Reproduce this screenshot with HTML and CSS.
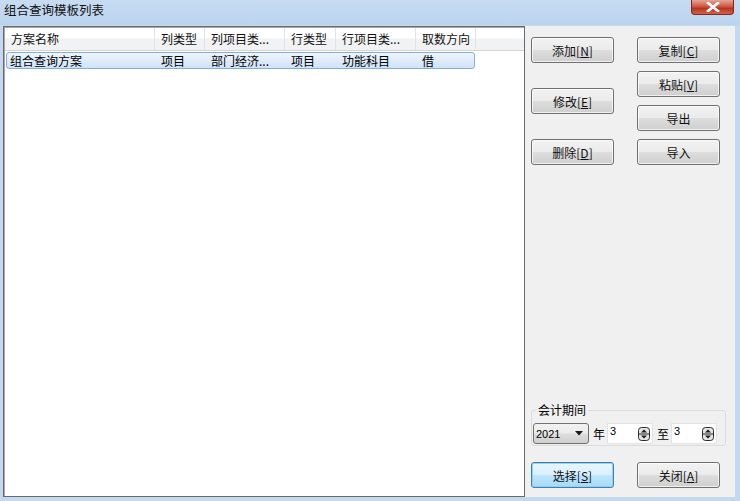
FILE: index.html
```html
<!DOCTYPE html>
<html>
    <head>
        <meta charset="utf-8">
        <link rel="stylesheet" href="styles.css">
    </head>
    <body>
        <div class='window'>
            <div class='titlebar'>
                <span class='title'>组合查询模板列表</span>
                <span class='close'>
                    <svg width="14" height="10" viewBox="0 0 14 10"><path d="M2 1 L12 9 M12 1 L2 9" stroke="#fff" stroke-width="2.6" stroke-linecap="square"/><path d="M2 1 L12 9 M12 1 L2 9" stroke="#fff" stroke-width="1.4" opacity="0.6"/></svg>
                </span>
            </div>
            <div class='content'>
                <div class='list'>
                    <div class='head'>
                        <div class='col c1'>方案名称</div>
                        <div class='col c2'>列类型</div>
                        <div class='col c3'>列项目类...</div>
                        <div class='col c4'>行类型</div>
                        <div class='col c5'>行项目类...</div>
                        <div class='col c6'>取数方向</div>
                        <div class='col rest'></div>
                    </div>
                    <div class='row selected'>
                        <div class='col c1'>组合查询方案</div>
                        <div class='col c2'>项目</div>
                        <div class='col c3'>部门经济...</div>
                        <div class='col c4'>项目</div>
                        <div class='col c5'>功能科目</div>
                        <div class='col c6'>借</div>
                    </div>
                </div>
                <div class='side'>
                    <div class='actions'>
                        <div class='stack left'>
                            <button class='btn'>添加[<u>N</u>]</button>
                            <button class='btn'>修改[<u>E</u>]</button>
                            <button class='btn'>删除[<u>D</u>]</button>
                        </div>
                        <div class='stack right'>
                            <button class='btn'>复制[<u>C</u>]</button>
                            <button class='btn'>粘贴[<u>V</u>]</button>
                            <button class='btn'>导出</button>
                            <button class='btn'>导入</button>
                        </div>
                    </div>
                    <fieldset class='period'>
                        <legend>会计期间</legend>
                        <div class='controls'>
                            <div class='combo'>
                                <span>2021</span>
                                <svg width="8" height="5" viewBox="0 0 8 5"><path d="M0 0 H8 L4 4.5 Z" fill="#1a1a1a"/></svg>
                            </div>
                            <span class='lbl'>年</span>
                            <div class='spin'>
                                <span>3</span>
                                <svg width="12" height="14" viewBox="0 0 12 14"><rect x="0.5" y="0.5" width="11" height="13" rx="3" fill="#e4e4e4" stroke="#2b2b2b"/><line x1="1" y1="7" x2="11" y2="7" stroke="#2b2b2b"/><path d="M3 5.5 L6 2.5 L9 5.5 Z M3 8.5 L9 8.5 L6 11.5 Z" fill="#1a1a1a"/></svg>
                            </div>
                            <span class='lbl'>至</span>
                            <div class='spin'>
                                <span>3</span>
                                <svg width="12" height="14" viewBox="0 0 12 14"><rect x="0.5" y="0.5" width="11" height="13" rx="3" fill="#e4e4e4" stroke="#2b2b2b"/><line x1="1" y1="7" x2="11" y2="7" stroke="#2b2b2b"/><path d="M3 5.5 L6 2.5 L9 5.5 Z M3 8.5 L9 8.5 L6 11.5 Z" fill="#1a1a1a"/></svg>
                            </div>
                        </div>
                    </fieldset>
                    <div class='bottom'>
                        <button class='btn default'>选择[<u>S</u>]</button>
                        <button class='btn'>关闭[<u>A</u>]</button>
                    </div>
                </div>
            </div>
        </div>
    </body>
</html>
```

FILE: styles.css
```css
body {
    margin: 0;
    font-family: "Noto Sans CJK SC", "Liberation Sans", sans-serif;
    font-size: 12px;
    color: #000;
}

.window {
    width: 740px;
    height: 501px;
    background: #c4d9f0;
    display: flex;
    flex-direction: column;
    overflow: hidden;
}

.titlebar {
    height: 25px;
    flex: none;
    display: flex;
    align-items: flex-start;
    justify-content: space-between;
    background: linear-gradient(#c7dcf2, #bcd3ee);
}

.title {
    margin: 1px 0 0 4px;
    font-size: 12.5px;
    line-height: 18px;
    color: #111;
}

.close {
    width: 43px;
    height: 15px;
    margin-right: 6px;
    display: flex;
    align-items: center;
    justify-content: center;
    box-sizing: border-box;
    border: 1px solid #7a2a22;
    border-top: none;
    border-radius: 0 0 4px 4px;
    background: linear-gradient(#e6a495, #cf5a45 45%, #b9341f 60%, #d2614a);
}

.content {
    flex: 1;
    display: flex;
    margin: 1px 5px 4px 3px;
}

.list {
    width: 522px;
    flex: none;
    box-sizing: border-box;
    background: #fff;
    border: 1px solid #6a6a6a;
    box-shadow: inset 1px 1px 0 #a8a8a8;
    padding: 1px 0 0 1px;
}

.head, .row {
    display: flex;
}

.head {
    height: 22px;
    background: linear-gradient(#fff 0%, #fff 45%, #f1f2f4 50%, #f1f2f4 100%);
    border-bottom: 1px solid #d5d5d5;
}

.head .col {
    line-height: 21px;
    border-right: 1px solid #e2e3e5;
    padding-left: 6px;
    color: #111;
}

.head .rest {
    flex: 1;
    border-right: none;
}

.col {
    flex: none;
    box-sizing: border-box;
    white-space: nowrap;
    overflow: hidden;
}

.c1 { width: 150px; }
.c2 { width: 50px; }
.c3 { width: 80px; }
.c4 { width: 51px; }
.c5 { width: 80px; }
.c6 { width: 60px; }

.row.selected {
    width: 469px;
    height: 17px;
    margin: 1px 0 0 1px;
    box-sizing: border-box;
    border: 1px solid #84acdd;
    border-radius: 3px;
    background: linear-gradient(#eef5fd, #cfe3f8);
}

.row .col {
    line-height: 15px;
    padding-left: 5px;
}

.row .c1 {
    width: 149px;
    padding-left: 3px;
}

.side {
    flex: 1;
    background: #f0f0f0;
    display: flex;
    flex-direction: column;
    padding: 11px 0 9px 6px;
}

.actions {
    display: flex;
    gap: 23px;
}

.stack {
    display: flex;
    flex-direction: column;
}

.stack.left {
    gap: 25px;
}

.stack.right {
    gap: 8px;
}

.btn {
    width: 83px;
    height: 26px;
    padding: 0;
    font-family: inherit;
    font-size: 12px;
    color: #111;
    border: 1px solid #707070;
    border-radius: 3px;
    background: linear-gradient(#f2f2f2 0%, #ebebeb 48%, #dddddd 52%, #cfcfcf 100%);
    box-shadow: inset 0 0 0 1px rgba(255, 255, 255, 0.7);
}

.btn u {
    text-decoration-thickness: 1px;
    text-underline-offset: 1px;
}

.btn.default {
    border-color: #3c7fb1;
    background: linear-gradient(#eaf6fd 0%, #d9f0fc 48%, #bee6fd 52%, #a7d9f5 100%);
    box-shadow: inset 0 0 0 1px #98d1ef;
}

.period {
    margin: auto 9px 0 0;
    padding: 6px 0 1px 1px;
    border: 1px solid #dcdcdc;
    border-radius: 3px;
    min-width: 0;
}

.period legend {
    padding: 0 2px;
    margin-left: 3px;
    line-height: 14px;
}

.controls {
    display: flex;
    align-items: center;
}

.combo {
    width: 56px;
    height: 21px;
    box-sizing: border-box;
    border: 1px solid #707070;
    border-radius: 3px;
    background: linear-gradient(#f2f2f2, #ebebeb 48%, #dddddd 52%, #cfcfcf);
    display: flex;
    align-items: center;
    justify-content: space-between;
    padding: 0 5px 0 2px;
    font-family: "Liberation Sans", sans-serif;
    font-size: 11px;
}

.lbl {
    margin: 0 2px 0 4px;
}

.spin {
    width: 46px;
    height: 21px;
    box-sizing: border-box;
    background: #fff;
    border: 1px solid #e3e3e3;
    display: flex;
    align-items: center;
    justify-content: space-between;
    padding: 0 2px 0 2px;
    font-family: "Liberation Sans", sans-serif;
    font-size: 11px;
}

.spin span {
    align-self: flex-start;
    margin-top: 1px;
}

.bottom {
    display: flex;
    gap: 23px;
    margin-top: 16px;
}

.bottom .btn {
    width: 83px;
}
```
